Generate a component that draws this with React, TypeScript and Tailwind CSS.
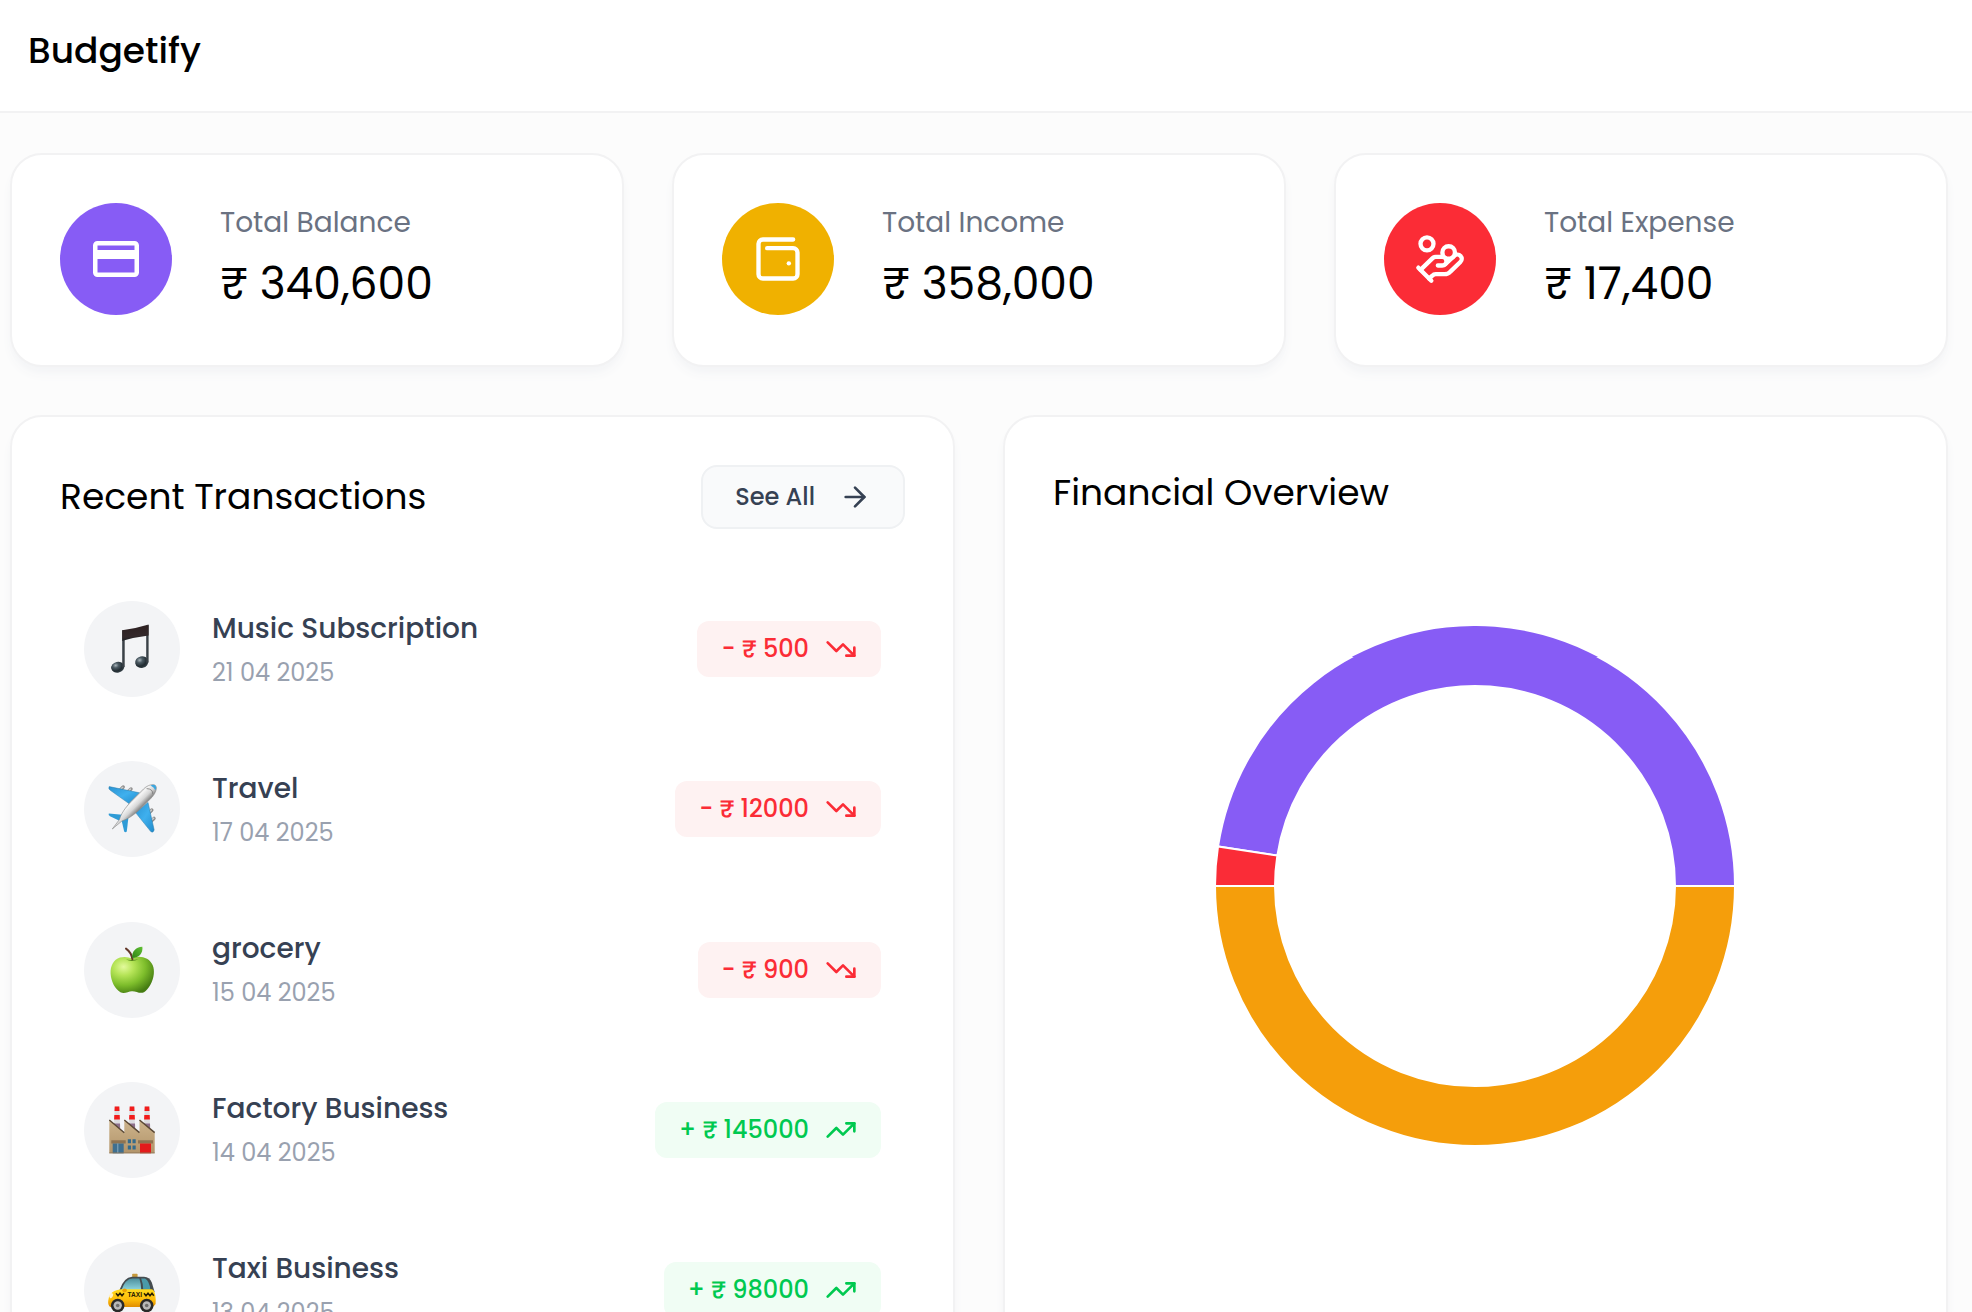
import type { ReactNode } from "react";
import { ArrowRight, HandCoins, TrendingDown, TrendingUp, WalletMinimal } from "lucide-react";

function CardIcon() {
  return (
    <svg className="size-[52px]" viewBox="0 0 52 52" fill="none">
      <rect x="5.25" y="10.25" width="41.5" height="31.5" rx="2.2" stroke="white" strokeWidth="4.5" />
      <rect x="5" y="17" width="42" height="9" fill="white" />
    </svg>
  );
}

function MusicEmoji() {
  return (
    <svg className="size-[50px] overflow-visible" viewBox="0 0 50 50">
      <defs>
        <linearGradient id="beam" x1="0" y1="0" x2="0.15" y2="1">
          <stop offset="0" stopColor="#5a5a60" />
          <stop offset="0.25" stopColor="#2e2223" />
          <stop offset="0.75" stopColor="#33282a" />
          <stop offset="1" stopColor="#1b2024" />
        </linearGradient>
        <radialGradient id="note" cx="0.38" cy="0.3" r="0.75">
          <stop offset="0" stopColor="#a9b4ba" />
          <stop offset="0.3" stopColor="#4b5a63" />
          <stop offset="0.7" stopColor="#212b31" />
          <stop offset="1" stopColor="#3a464d" />
        </radialGradient>
      </defs>
      <ellipse cx="10.7" cy="43.2" rx="6.6" ry="5.4" transform="rotate(-12 10.7 43.2)" fill="url(#note)" />
      <ellipse cx="34.7" cy="38.1" rx="6.6" ry="5.8" transform="rotate(-12 34.7 38.1)" fill="url(#note)" />
      <path d="M15.2 6.3h2.5V43l-2.5.5zM39.2 1h2.4v37.4l-2.4.4z" fill="#3a4147" />
      <path d="M15.2 6.2Q28 4.6 41.6.4V11.6Q28 13.4 16.6 16.4L15.2 17Z" fill="url(#beam)" />
    </svg>
  );
}

function PlaneEmoji() {
  return (
    <svg className="size-[50px] overflow-visible" viewBox="0 0 50 50">
      <defs>
        <linearGradient id="wing" x1="0" y1="0" x2="1" y2="1">
          <stop offset="0" stopColor="#2a93d2" />
          <stop offset="0.5" stopColor="#3fb0ee" />
          <stop offset="1" stopColor="#1f8acb" />
        </linearGradient>
        <linearGradient id="hull" gradientUnits="userSpaceOnUse" x1="24" y1="13" x2="34" y2="23">
          <stop offset="0" stopColor="#c9c9c9" />
          <stop offset="0.35" stopColor="#f4f4f4" />
          <stop offset="0.7" stopColor="#d6d6d6" />
          <stop offset="1" stopColor="#8f8f8f" />
        </linearGradient>
      </defs>
      <g stroke="#8c8c8c" strokeLinecap="round" strokeWidth="3.4">
        <path d="M13.8 5.4l2.4-2.4M21.8 7l2.2-2M42.6 28.4l2.2-2.4M44.8 36.4l2.2-2" />
      </g>
      <g stroke="#cfcfcf" strokeLinecap="round" strokeWidth="1.5">
        <path d="M14 4.8l1.8-1.6M22 6.4l1.6-1.4M42.8 27.6l1.6-1.6M45 35.6l1.6-1.4" />
      </g>
      <path d="M2.2 2.6Q.8 5.2 4 6.8L22 19.6 32.5 8.8Z" fill="url(#wing)" stroke="#2a7cab" strokeWidth="0.5" />
      <path d="M28.6 28.6L43.8 47.6Q46 49.4 47.2 46L41 18.4Z" fill="url(#wing)" stroke="#2a7cab" strokeWidth="0.5" />
      <path d="M1.8 29.4q-.8 1.8 1.2 2.8l11 5.2 4-6.4z" fill="#2e9bd6" />
      <path d="M14.6 36.6l2.6 10.8q1 1.4 2.6.2L21.6 31.8z" fill="#2e9bd6" />
      <path d="M5.3 45L12.5 35.4C14 30 18 24 24 17.6L36.5 5C40.5 1 46.5-.6 48.5 1.6C50.6 4 48.5 9.2 45 13.3L32.6 25.6C26.5 31.4 20.5 35.2 14.8 37.1Z" fill="url(#hull)" stroke="#858585" strokeWidth="0.6" />
      <path d="M43.5 1.4Q47.2.2 48.6 1.7T48.5 6.2Q47 2.9 43.5 1.4Z" fill="#3ba6df" />
      <path d="M39.6 4.6q6.4.2 6.2 5.6" fill="none" stroke="#777" strokeWidth="0.8" />
    </svg>
  );
}

function AppleEmoji() {
  return (
    <svg className="size-[50px] overflow-visible" viewBox="0 0 50 50">
      <defs>
        <radialGradient id="apple" cx="0.3" cy="0.28" r="0.78">
          <stop offset="0" stopColor="#e3fa9c" />
          <stop offset="0.3" stopColor="#b5e457" />
          <stop offset="0.65" stopColor="#7dbd2b" />
          <stop offset="1" stopColor="#457c12" />
        </radialGradient>
        <linearGradient id="leaf" x1="0" y1="1" x2="1" y2="0">
          <stop offset="0" stopColor="#2f8415" />
          <stop offset="1" stopColor="#62c135" />
        </linearGradient>
      </defs>
      <path d="M25 13.6C29 11 35 11 40 13.8C45.5 17 47.6 23 46.8 29C46 37 41.5 44.5 37 47.2C33 49.2 29 46 25 46.2C21 46.4 17.5 49.2 13.4 47.2C8 44 4 36.5 3.6 28.5C3.3 21 6.5 14.8 13 12.6C17.5 11.2 21.5 12 25 13.6Z" fill="url(#apple)" />
      <path d="M19 14.6Q25 17.6 31.5 14.2Q25.6 15.6 19 14.6Z" fill="#578b1c" />
      <path d="M25.4 14.2Q24.4 7.4 19 3.6" fill="none" stroke="#64392a" strokeWidth="2" strokeLinecap="round" />
      <path d="M25.2 12.9C24.6 6.6 28.5 2.2 35.4 1.7C36 8.3 32.4 12.6 25.2 12.9Z" fill="url(#leaf)" />
    </svg>
  );
}

function FactoryEmoji() {
  return (
    <svg className="size-[50px] overflow-visible" viewBox="0 0 50 50">
      <defs>
        <linearGradient id="brick" x1="0" y1="0" x2="0" y2="1">
          <stop offset="0" stopColor="#cdb48c" />
          <stop offset="1" stopColor="#b2946a" />
        </linearGradient>
      </defs>
      {[10, 25, 40].map((x) => (
        <g key={x}>
          <path d={`M${x - 2.3} 1.5h4.6l.8 21h-6.2z`} fill="#dcdce0" />
          <path d={`M${x - 2.3} 1.5h4.6l.2 4.4h-5zM${x - 2.7} 10h5.4l.2 4.6h-5.8z`} fill="#f21c1c" />
          <path d={`M${x - 3} 18.5h6l.2 7h-6.4z`} fill="#8d6f8b" />
        </g>
      ))}
      <path d="M2.3 15l15 12.7V15l15.2 12.7V15l15.2 12.7v20.6H2.3z" fill="url(#brick)" />
      <path d="M2.3 15l15 12.7M17.3 15l15.2 12.7M32.5 15l15.2 12.7" stroke="#5b4936" strokeWidth="1.5" />
      <path d="M4.3 35.3h14.4v3.2H4.3zM31 35.3h15v3.2H31z" fill="#8e7351" />
      <path d="M5.7 38.5h11v9.8h-11z" fill="#3f6f8f" />
      <path d="M10.8 38.5v9.8" stroke="#91b2c5" strokeWidth="0.9" />
      <path d="M20.8 34.3h3.2v4h-3.2zM25.5 34.3h3.2v4h-3.2zM20.8 40.4h3.2v4h-3.2zM25.5 40.4h3.2v4h-3.2z" fill="#356b8c" />
      <path d="M33 38.5h11v9.8H33z" fill="#e31b1b" />
      <path d="M2.3 47.9h45.4" stroke="#8a7458" strokeWidth="0.8" />
    </svg>
  );
}

function TaxiEmoji() {
  return (
    <svg className="size-[50px] overflow-visible" viewBox="0 0 50 50">
      <defs>
        <linearGradient id="cab" x1="0" y1="0" x2="0" y2="1">
          <stop offset="0" stopColor="#ffdc1f" />
          <stop offset="0.6" stopColor="#fdbb08" />
          <stop offset="1" stopColor="#e08c00" />
        </linearGradient>
        <linearGradient id="glass" x1="0" y1="0" x2="0" y2="1">
          <stop offset="0" stopColor="#4d8f9d" />
          <stop offset="1" stopColor="#8ed5de" />
        </linearGradient>
      </defs>
      <rect x="25.2" y="8.8" width="5.4" height="3.6" rx="0.8" fill="#c79a3d" />
      <path d="M12.5 25Q17 12.2 25 11.8H37Q42.5 12 44.8 17.5L47.6 27H12.5Z" fill="#444b4f" />
      <path d="M14.5 25Q18.3 13.8 25.3 13.4H32.4Q34 18 34.2 25Z" fill="url(#glass)" />
      <path d="M34.2 13.4H38Q42.3 15.5 43.4 24.6H36.2Q36 18 34.2 13.4Z" fill="#4a9aa9" />
      <path d="M3.4 29.5Q6 25 14 24.2H44.5Q47.6 24.5 48.3 30.5Q49 35 48.6 39L46 42H3.2Q.8 40 1.2 36Q1.5 31.5 3.4 29.5Z" fill="url(#cab)" />
      <path d="M9 28.3l2 2.5 2-2.5 2 2.5 2-2.5M37 28.3l2 2.5 2-2.5 2 2.5 2-2.5 1.8 2.5" fill="none" stroke="#2c2100" strokeWidth="1.5" />
      <text x="27.8" y="32" textAnchor="middle" fontSize="6.6" fontWeight="700" fill="#2c2100" className="font-['Liberation_Sans',sans-serif]">
        TAXI
      </text>
      <ellipse cx="17.6" cy="25.3" rx="2.3" ry="1.9" fill="#eda204" />
      <ellipse cx="4.2" cy="30.6" rx="1.8" ry="2.6" fill="#fff3c9" transform="rotate(25 4.2 30.6)" />
      {[10.7, 39.7].map((x) => (
        <g key={x}>
          <circle cx={x} cy="40.5" r="6.8" fill="#292929" />
          <circle cx={x} cy="40.5" r="4.2" fill="#b9b9b9" />
          <circle cx={x} cy="40.5" r="1.8" fill="#6d6d6d" />
        </g>
      ))}
    </svg>
  );
}

const CENTER = 260;
const OUTER = 260;
const INNER = 200;

function arcPath(start: number, end: number) {
  const point = (radius: number, deg: number) => {
    const rad = (deg * Math.PI) / 180;
    return `${CENTER + radius * Math.cos(rad)} ${CENTER - radius * Math.sin(rad)}`;
  };
  return `M${point(OUTER, start)}A${OUTER} ${OUTER} 0 0 0 ${point(OUTER, end)}L${point(INNER, end)}A${INNER} ${INNER} 0 0 1 ${point(INNER, start)}Z`;
}

const SPLIT = (340600 / (340600 + 17400 + 358000)) * 360;

function Donut() {
  return (
    <svg className="size-[520px]" viewBox="0 0 520 520">
      <clipPath id="cap">
        <rect width="520" height="31" />
      </clipPath>
      <g stroke="white" strokeWidth="2">
        <path d={arcPath(0, SPLIT)} fill="#875cf5" />
        <path d={arcPath(SPLIT, 180)} fill="#fa2c37" />
        <path d={arcPath(180, 359.999)} fill="#f59e0b" />
      </g>
      <path d={arcPath(0, SPLIT)} fill="#875cf5" clipPath="url(#cap)" />
    </svg>
  );
}

function StatCard({ icon, label, value, color }: { icon: ReactNode; label: string; value: string; color: string }) {
  return (
    <div className="flex gap-12 rounded-[32px] border-2 border-[#f2f2f3] bg-white p-12 shadow-[0_8px_12px_-2px_#f3f4f6,0_4px_8px_-4px_#f3f4f6]">
      <div className={`flex size-28 items-center justify-center rounded-full text-white ${color}`}>{icon}</div>
      <div>
        <h6 className="mb-2 text-[28px] leading-10 text-[#6a7282]">{label}</h6>
        <p className="text-[44px] leading-[66px]">{value}</p>
      </div>
    </div>
  );
}

const transactions = [
  { title: "Music Subscription", date: "21 04 2025", amount: 500, income: false, icon: <MusicEmoji /> },
  { title: "Travel", date: "17 04 2025", amount: 12000, income: false, icon: <PlaneEmoji /> },
  { title: "grocery", date: "15 04 2025", amount: 900, income: false, icon: <AppleEmoji /> },
  { title: "Factory Business", date: "14 04 2025", amount: 145000, income: true, icon: <FactoryEmoji /> },
  { title: "Taxi Business", date: "13 04 2025", amount: 98000, income: true, icon: <TaxiEmoji /> },
];

export default function App() {
  return (
    <div className="h-[1312px] overflow-hidden bg-[#fcfcfc] font-['Poppins',sans-serif] text-black">
      <header className="h-[113px] border-b-2 border-[#f2f2f3] bg-white px-7 pt-6">
        <h2 className="text-4xl leading-[54px] font-medium">Budgetify</h2>
      </header>

      <main className="pt-10 pr-6 pl-2.5">
        <div className="grid grid-cols-3 gap-12">
          <StatCard icon={<CardIcon />} label="Total Balance" value="₹ 340,600" color="bg-[#875cf5]" />
          <StatCard icon={<WalletMinimal size={52} />} label="Total Income" value="₹ 358,000" color="bg-[#f0b100]" />
          <StatCard icon={<HandCoins size={52} />} label="Total Expense" value="₹ 17,400" color="bg-[#fb2c36]" />
        </div>

        <div className="mt-12 grid grid-cols-2 gap-12">
          <section className="rounded-[32px] border-2 border-[#f2f2f3] bg-white p-12 shadow-[0_8px_12px_-2px_#f3f4f6,0_4px_8px_-4px_#f3f4f6]">
            <div className="flex items-center justify-between">
              <h5 className="text-4xl leading-[54px]">Recent Transactions</h5>
              <button className="flex h-16 items-center gap-6 rounded-2xl border-2 border-[#eff1f3] bg-gray-50 px-8 text-2xl font-medium text-[#364153]">
                See All
                <ArrowRight size={32} />
              </button>
            </div>
            <div className="mt-[48.4px]">
              {transactions.map((t) => (
                <div key={t.title} className="mb-[16.1px] flex h-36 items-center gap-8 p-6">
                  <div className="flex size-24 items-center justify-center rounded-full bg-gray-100">{t.icon}</div>
                  <div className="flex flex-1 items-center justify-between">
                    <div>
                      <p className="text-[28px] leading-[42px] font-medium text-[#364153]">{t.title}</p>
                      <p className="mt-[5px] text-2xl leading-9 text-[#99a1af]">{t.date}</p>
                    </div>
                    <div
                      className={`flex h-14 items-center gap-4 rounded-xl px-6 text-2xl font-medium ${
                        t.income ? "bg-[#f0fdf4] text-[#00c950]" : "bg-[#fef2f2] text-[#fb2c36]"
                      }`}
                    >
                      <span>
                        {t.income ? "+" : "-"} ₹ {t.amount}
                      </span>
                      {t.income ? <TrendingUp size={32} /> : <TrendingDown size={32} />}
                    </div>
                  </div>
                </div>
              ))}
            </div>
          </section>

          <section className="rounded-[32px] border-2 border-[#f2f2f3] bg-white p-12 shadow-[0_8px_12px_-2px_#f3f4f6,0_4px_8px_-4px_#f3f4f6]">
            <h5 className="text-4xl leading-[55px]">Financial Overview</h5>
            <div className="mt-[106px] flex justify-center pr-px">
              <Donut />
            </div>
          </section>
        </div>
      </main>
    </div>
  );
}
